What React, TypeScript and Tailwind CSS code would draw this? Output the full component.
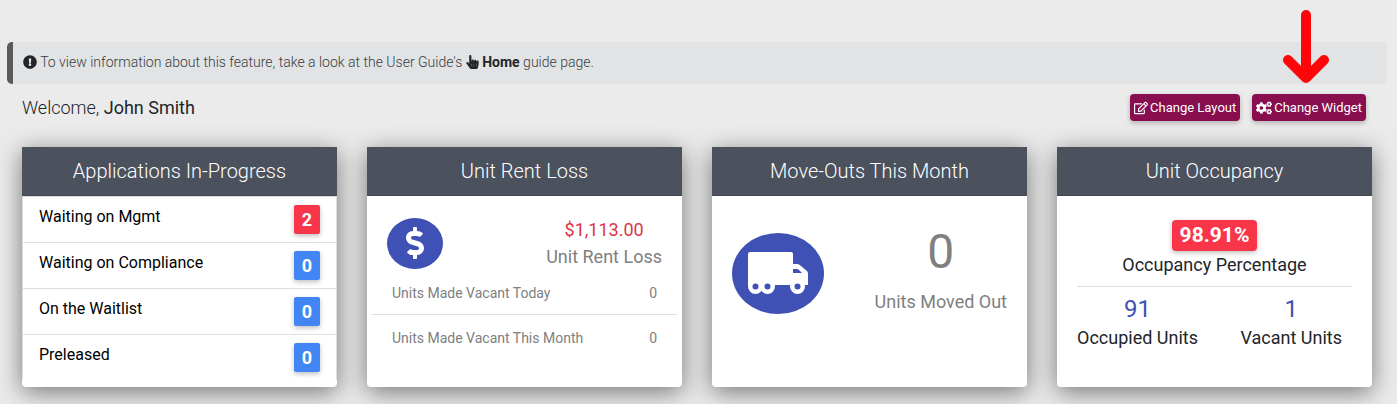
import { FaCogs, FaDollarSign, FaExclamationCircle, FaHandPointer, FaRegEdit } from "react-icons/fa";

const applications = [
  { label: "Waiting on Mgmt", count: 2, color: "bg-[#f93549]" },
  { label: "Waiting on Compliance", count: 0, color: "bg-[#4285f4]" },
  { label: "On the Waitlist", count: 0, color: "bg-[#4285f4]" },
  { label: "Preleased", count: 0, color: "bg-[#4285f4]" },
];

const vacancies = [
  { label: "Units Made Vacant Today", count: 0 },
  { label: "Units Made Vacant This Month", count: 0 },
];

const Card = ({ title, children }: { title: string; children: React.ReactNode }) => (
  <section className="flex min-h-60 flex-col rounded-b bg-white shadow-[0_5px_25px_rgba(0,0,0,0.5)]">
    <h2 className="border-b border-[#434853] bg-[#4b515d] py-2 text-center text-xl leading-8 font-light text-white">
      {title}
    </h2>
    {children}
  </section>
);

const Truck = () => (
  <svg viewBox="0 0 60 42" className="w-[60px]" fill="#fff" aria-hidden="true">
    <path d="M2 0H43Q45 0 45 2V33H0V2Q0 0 2 0Z" />
    <path
      fillRule="evenodd"
      d="M44 12H49Q51 12 53 14L59 19Q60 20 60 22V33H44ZM45 17V21H54L50.500 17.500Q50 17 49 17Z"
    />
    <path d="M0 30H27V34H0Z" />
    <circle cx="7.500" cy="34.500" r="7.500" />
    <circle cx="19.500" cy="34.500" r="7.500" />
    <circle cx="49.500" cy="34.500" r="7.500" />
    <circle cx="7.500" cy="34.500" r="3" fill="#3f51b5" />
    <circle cx="19.500" cy="34.500" r="3" fill="#3f51b5" />
    <circle cx="49.500" cy="34.500" r="3" fill="#3f51b5" />
  </svg>
);

const buttonClass =
  "flex h-[27px] items-center gap-[2px] rounded bg-[#880e4f] px-1 text-[13px] text-white shadow-[0_2px_5px_rgba(0,0,0,0.25)]";

export default function App() {
  return (
    <main className="min-h-screen bg-[#ebebeb] pt-[42px] pr-[10px] pb-4 pl-[7px] font-[Roboto,sans-serif] text-[#212529]">
      <div className="rounded-[5px] border-l-[6px] border-[#5a5a5a] bg-[#e2e3e5] pt-2 pb-[10px] pl-[10px] text-sm leading-6 font-light text-[#383d41]">
        <FaExclamationCircle className="inline size-[14px] align-[-2px] text-[#212529]" /> To view
        information about this feature, take a look at the User Guide's{" "}
        <a href="#" className="font-bold text-[#212529]">
          <FaHandPointer className="inline h-[14px] w-[13px] align-[-2px]" /> Home
        </a>{" "}
        guide page.
      </div>

      <div className="flex items-start justify-between pt-[10px] pr-[21px] pl-[15px]">
        <p className="text-lg leading-7 font-light">
          Welcome, <span className="font-normal">John Smith</span>
        </p>
        <div className="flex gap-3">
          <button type="button" className={buttonClass}>
            <FaRegEdit className="size-[14px]" />
            Change Layout
          </button>
          <div className="relative">
            <button type="button" className={buttonClass}>
              <FaCogs className="h-[14px] w-4" />
              Change Widget
            </button>
            <svg
              viewBox="0 0 48 76"
              className="absolute bottom-full left-[30px] mb-[10px] w-12"
              fill="none"
              stroke="#fe0509"
              strokeWidth="10"
              strokeLinecap="round"
              strokeLinejoin="round"
              aria-hidden="true"
            >
              <path d="M24 7V70M6 52L24 70L42 52" />
            </svg>
          </div>
        </div>
      </div>

      <div className="grid grid-cols-4 gap-[30px] pt-[25px] pr-[15px] pl-[15px]">
        <Card title="Applications In-Progress">
          <ul className="mb-[7px] divide-y divide-[#dedede] border-x border-t border-[#dedede]">
            {applications.map((item) => (
              <li key={item.label} className="flex justify-between px-4 py-2 text-black">
                <span className="leading-6">{item.label}</span>
                <span
                  className={`${item.color} rounded-[2px] px-2 text-lg leading-[29px] font-bold text-white shadow-[0_2px_5px_rgba(0,0,0,0.25)]`}
                >
                  {item.count}
                </span>
              </li>
            ))}
          </ul>
        </Card>

        <Card title="Unit Rent Loss">
          <div className="flex items-center justify-between px-5 pt-5 text-lg text-[#808080]">
            <div className="flex h-[51px] w-14 items-center justify-center rounded-[50%] bg-[#3f51b5]">
              <FaDollarSign className="size-8 text-white" />
            </div>
            <div className="text-center leading-[27px]">
              <p className="text-[#dc3545]">$1,113.00</p>
              <p>Unit Rent Loss</p>
            </div>
          </div>
          <ul className="mx-[5px] divide-y divide-[#dedede] text-sm leading-5 text-[#808080]">
            {vacancies.map((item) => (
              <li key={item.label} className="flex justify-between px-5 pt-[13px] pb-[11px]">
                <span>{item.label}</span>
                <span>{item.count}</span>
              </li>
            ))}
          </ul>
        </Card>

        <Card title="Move-Outs This Month">
          <div className="flex items-center justify-between px-5 pt-[26px] text-[#808080]">
            <div className="mt-2 flex h-[81px] w-[92px] items-center justify-center rounded-[50%] bg-[#3f51b5]">
              <Truck />
            </div>
            <div className="text-center">
              <p className="text-5xl leading-[60px]">0</p>
              <p className="pt-[6px] text-lg leading-7">Units Moved Out</p>
            </div>
          </div>
        </Card>

        <Card title="Unit Occupancy">
          <div className="px-5 pt-6 text-center text-lg">
            <span className="inline-block rounded bg-[#f93549] px-2 text-[21px] leading-[31px] font-bold text-white shadow-[0_2px_5px_rgba(0,0,0,0.25)]">
              98.91%
            </span>
            <p className="pb-[7px] leading-7">Occupancy Percentage</p>
            <div className="flex justify-between border-t border-[#dedede] pt-2">
              <div>
                <p className="text-2xl leading-7 text-[#3f51b5]">91</p>
                <p className="leading-[30px]">Occupied Units</p>
              </div>
              <div className="pr-[10px]">
                <p className="text-2xl leading-7 text-[#3f51b5]">1</p>
                <p className="leading-[30px]">Vacant Units</p>
              </div>
            </div>
          </div>
        </Card>
      </div>
    </main>
  );
}
